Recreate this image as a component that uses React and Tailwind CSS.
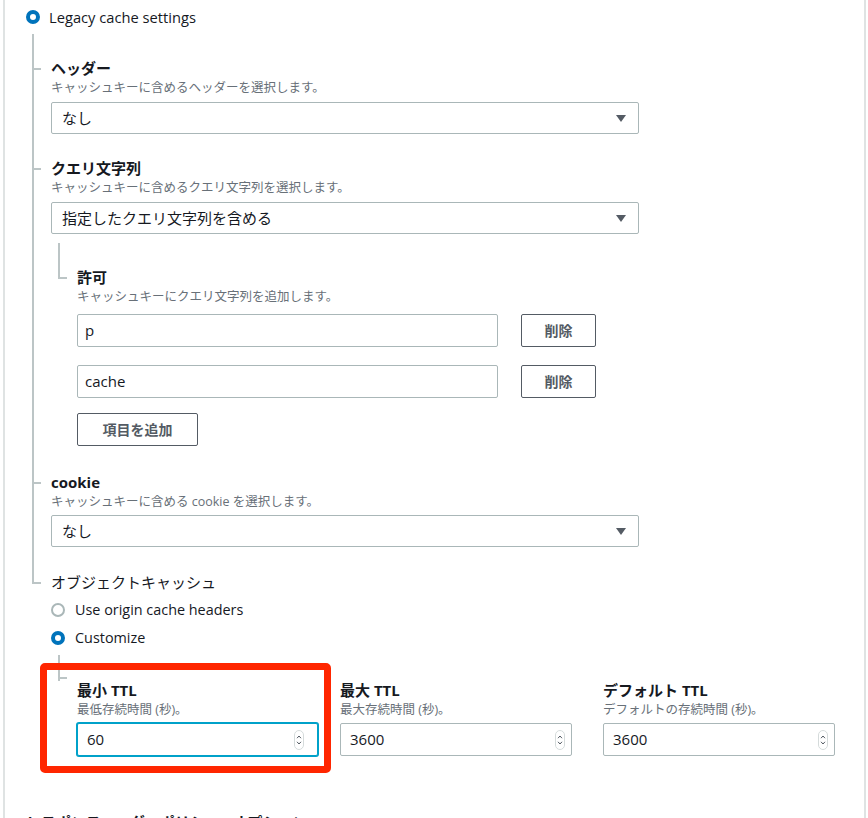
import React from 'react';

const Radio = ({ checked }) =>
  checked ? (
    <span className="box-border block h-[14px] w-[14px] shrink-0 rounded-full border-[4px] border-[#0073bb] bg-white" />
  ) : (
    <span className="box-border block h-[14px] w-[14px] shrink-0 rounded-full border-2 border-[#aab7b8] bg-white" />
  );

const Caret = () => (
  <svg width="10" height="7" viewBox="0 0 10 7">
    <path d="M0 0h10L5 7z" fill="#545b64" />
  </svg>
);

const Spinner = () => (
  <svg width="10" height="20" viewBox="0 0 10 20">
    <rect x="0.5" y="0.5" width="9" height="19" rx="4.5" fill="#fff" stroke="#d5dbdb" />
    <path d="M3 8.2l2-2.2 2 2.2" stroke="#545b64" strokeWidth="1" fill="none" />
    <path d="M3 11.8l2 2.2 2-2.2" stroke="#545b64" strokeWidth="1" fill="none" />
  </svg>
);

const Select = ({ value, className }) => (
  <div className={`flex h-[32px] w-[588px] items-center justify-between rounded-[2px] border border-[#aab7b8] pl-[10px] pr-[12px] text-[15px] ${className}`}>
    <span>{value}</span>
    <Caret />
  </div>
);

const Label = ({ children, bold = true }) => (
  <div className={`text-[15px] leading-[20px] text-[#16191f] ${bold ? 'font-bold' : ''}`}>{children}</div>
);

const Desc = ({ children }) => (
  <div className="text-[12.5px] leading-[20px] text-[#687078]">{children}</div>
);

// one branch of the tree: vertical line segment + short tick at the label
const TreeItem = ({ pad, tick, last, lastH, children }) => (
  <div className={`relative pl-[19px] ${pad}`}>
    <span className={`absolute left-0 top-0 w-[2px] bg-[#bcc5c6] ${last ? lastH : 'bottom-0'}`} />
    <span className={`absolute left-0 h-[2px] w-[9px] bg-[#bcc5c6] ${tick}`} />
    {children}
  </div>
);

const TtlField = ({ label, desc, value, focused, width }) => (
  <div className="flex flex-col">
    <Label>{label}</Label>
    <Desc>{desc}</Desc>
    <div
      className={`mt-[3px] flex h-[33px] items-center justify-between rounded-[2px] bg-white pl-[9px] text-[15px] ${width} ${
        focused
          ? 'border border-[#00a1c9] pr-[13px] shadow-[0_0_0_1px_#00a1c9]'
          : 'border border-[#aab7b8] pr-[6px]'
      }`}
    >
      <span>{value}</span>
      <Spinner />
    </div>
  </div>
);

export default function App() {
  return (
    <div className="relative h-[818px] w-full overflow-hidden bg-white font-['Open_Sans','Noto_Sans_CJK_JP',sans-serif] text-[#16191f]">
      <div className="ml-[3px] h-full w-[863px] border-x-2 border-[#dfe3e3]">
        {/* Legacy cache settings */}
        <div className="flex h-[34px] items-center gap-[9px] pl-[21px]">
          <Radio checked />
          <span className="text-[14.7px]">Legacy cache settings</span>
        </div>

        <div className="ml-[27px]">
          <TreeItem pad="pt-[24px]" tick="top-[34px]">
            <Label>ヘッダー</Label>
            <Desc>キャッシュキーに含めるヘッダーを選択します。</Desc>
            <Select value="なし" className="mt-[4px]" />
          </TreeItem>

          <TreeItem pad="pt-[24px]" tick="top-[34px]">
            <Label>クエリ文字列</Label>
            <Desc>キャッシュキーに含めるクエリ文字列を選択します。</Desc>
            <Select value="指定したクエリ文字列を含める" className="mt-[4px]" />

            <div className="ml-[7px] mt-[9px]">
              <TreeItem pad="pt-[24px]" tick="top-[34px]" last lastH="h-[35px]">
                <Label>許可</Label>
                <Desc>キャッシュキーにクエリ文字列を追加します。</Desc>
                {['p', 'cache'].map((v, i) => (
                  <div key={v} className={`flex items-center gap-[23px] ${i === 0 ? 'mt-[7px]' : 'mt-[18px]'}`}>
                    <div className="flex h-[33px] w-[421px] items-center rounded-[2px] border border-[#aab7b8] pl-[7px] text-[15px]">
                      {v}
                    </div>
                    <button className="h-[33px] w-[75px] rounded-[2px] border border-[#545b64] bg-white text-[14px] font-bold text-[#545b64]">
                      削除
                    </button>
                  </div>
                ))}
                <button className="mt-[15px] h-[33px] w-[121px] rounded-[2px] border border-[#545b64] bg-white text-[14px] font-bold text-[#545b64]">
                  項目を追加
                </button>
              </TreeItem>
            </div>
          </TreeItem>

          <TreeItem pad="pt-[26px]" tick="top-[36px]">
            <Label>cookie</Label>
            <Desc>キャッシュキーに含める cookie を選択します。</Desc>
            <Select value="なし" className="mt-[3px]" />
          </TreeItem>

          <TreeItem pad="pt-[25px]" tick="top-[35px]" last lastH="h-[36px]">
            <Label bold={false}>オブジェクトキャッシュ</Label>
            <div className="mt-[4px] flex flex-col">
              <div className="flex h-[28px] items-center gap-[10px]">
                <Radio />
                <span className="text-[14.4px]">Use origin cache headers</span>
              </div>
              <div className="flex h-[28px] items-center gap-[10px]">
                <Radio checked />
                <span className="text-[14.4px]">Customize</span>
              </div>
            </div>

            <div className="relative ml-[7px] pl-[19px] pt-[28px]">
              <span className="absolute left-0 top-[3px] h-[26px] w-[2px] bg-[#bcc5c6]" />
              <span className="absolute left-0 top-[25px] h-[2px] w-[9px] bg-[#bcc5c6]" />
              <div className="grid grid-cols-[263px_263px_263px]">
                <TtlField label="最小 TTL" desc="最低存続時間 (秒)。" value="60" focused width="w-[241px]" />
                <TtlField label="最大 TTL" desc="最大存続時間 (秒)。" value="3600" width="w-[232px]" />
                <TtlField label="デフォルト TTL" desc="デフォルトの存続時間 (秒)。" value="3600" width="w-[232px]" />
              </div>
            </div>
          </TreeItem>
        </div>

        <div className="mt-[56px] pl-[21px] text-[15px] font-bold leading-[20px]">
          レスポンスヘッダーポリシー - オプション
        </div>
      </div>

      {/* red highlight around the minimum TTL field */}
      <div className="absolute left-[40px] top-[663px] h-[110px] w-[291px] rounded-[5px] border-[7px] border-[#ff2600]" />
    </div>
  );
}
